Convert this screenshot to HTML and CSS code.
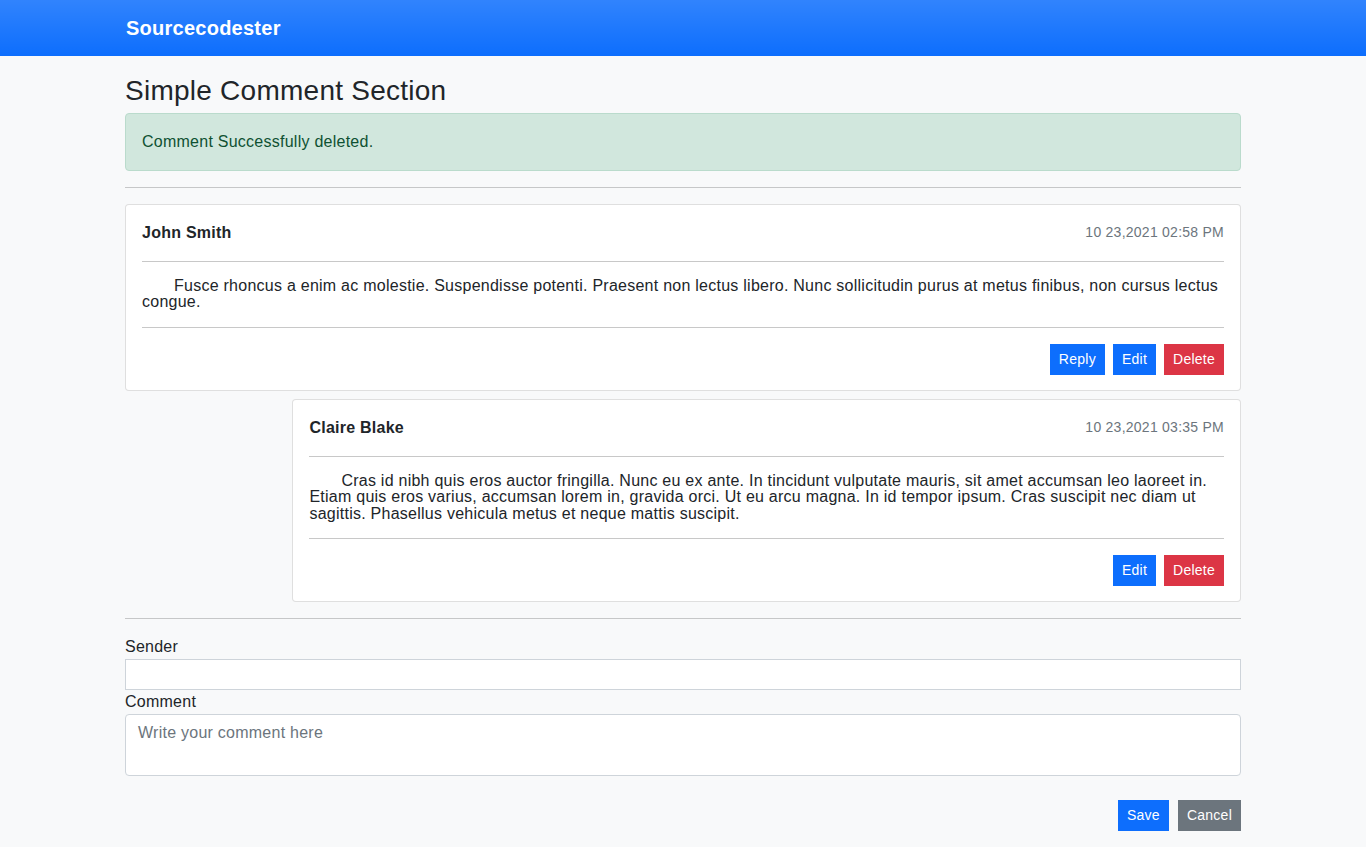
FILE: index.html
```html
<!DOCTYPE html>
<html lang="en">
<head>
    <meta charset="UTF-8">
    <meta name="viewport" content="width=device-width, initial-scale=1.0">
    <title>Simple Comment Section</title>
    <link rel="stylesheet" href="styles.css">
</head>
<body>
    <nav class="navbar">
        <div class="container">
            <a href="#" class="navbar-brand">Sourcecodester</a>
        </div>
    </nav>

    <div class="container page">
        <h3 class="page-title">Simple Comment Section</h3>

        <div class="alert alert-success">Comment Successfully deleted.</div>
        <hr>

        <div class="comment-list">
            <div class="card">
                <div class="card-body">
                    <div class="comment-head">
                        <div class="sender">John Smith</div>
                        <div class="date">10 23,2021 02:58 PM</div>
                    </div>
                    <hr>
                    <p class="comment-text">Fusce rhoncus a enim ac molestie. Suspendisse potenti. Praesent non lectus libero. Nunc sollicitudin purus at metus finibus, non cursus lectus congue.</p>
                    <hr>
                    <div class="actions">
                        <button class="btn btn-primary">Reply</button>
                        <button class="btn btn-primary">Edit</button>
                        <button class="btn btn-danger">Delete</button>
                    </div>
                </div>
            </div>

            <div class="card reply">
                <div class="card-body">
                    <div class="comment-head">
                        <div class="sender">Claire Blake</div>
                        <div class="date">10 23,2021 03:35 PM</div>
                    </div>
                    <hr>
                    <p class="comment-text">Cras id nibh quis eros auctor fringilla. Nunc eu ex ante. In tincidunt vulputate mauris, sit amet accumsan leo laoreet in. Etiam quis eros varius, accumsan lorem in, gravida orci. Ut eu arcu magna. In id tempor ipsum. Cras suscipit nec diam ut sagittis. Phasellus vehicula metus et neque mattis suscipit.</p>
                    <hr>
                    <div class="actions">
                        <button class="btn btn-primary">Edit</button>
                        <button class="btn btn-danger">Delete</button>
                    </div>
                </div>
            </div>
        </div>

        <hr>

        <form class="comment-form" onsubmit="return false">
            <label for="sender" class="form-label">Sender</label>
            <input type="text" id="sender" class="form-control input-sm">
            <label for="comment" class="form-label">Comment</label>
            <textarea id="comment" class="form-control" rows="2" placeholder="Write your comment here"></textarea>
            <div class="form-actions">
                <button class="btn btn-primary">Save</button>
                <button type="reset" class="btn btn-secondary">Cancel</button>
            </div>
        </form>
    </div>
</body>
</html>
```

FILE: styles.css
```css
* {
    box-sizing: border-box;
}

body {
    margin: 0;
    font-family: "Comic Sans MS", "Liberation Sans", Arial, sans-serif;
    font-size: 16px;
    line-height: 1.5;
    letter-spacing: 0.25px;
    color: #212529;
    background-color: #f8f9fa;
}

.container {
    width: 1140px;
    margin: 0 auto;
    padding: 0 12px;
}

/* Navbar */
.navbar {
    background-color: #0d6efd;
    background-image: linear-gradient(180deg, rgba(255, 255, 255, 0.15), rgba(255, 255, 255, 0));
    padding: 8px 0;
}

.navbar-brand {
    display: inline-block;
    padding: 5px 0;
    margin-left: 1px;
    font-size: 20px;
    line-height: 30px;
    font-weight: 600;
    color: #fff;
    text-decoration: none;
}

.page {
    padding-top: 18px;
    padding-bottom: 16px;
}

.page-title {
    margin: 0 0 5px;
    font-size: 28px;
    font-weight: 500;
    line-height: 1.2;
}

hr {
    margin: 16px 0;
    border: 0;
    border-top: 1px solid #c6c7c8;
}

.alert {
    padding: 16px;
    margin-bottom: 16px;
    border: 1px solid transparent;
    border-radius: 4px;
}

.alert-success {
    color: #0f5132;
    background-color: #d1e7dd;
    border-color: #badbcc;
}

/* Comments */
.card {
    background: #fff;
    border: 1px solid rgba(0, 0, 0, 0.125);
    border-radius: 4px;
    margin-bottom: 8px;
}

.card:last-child {
    margin-bottom: 0;
}

.card.reply {
    margin-left: 15%;
}

.card-body {
    padding: 16px 16px 15px;
}

.card-body hr {
    border-top-color: #c8c8c8;
}

.comment-head {
    display: flex;
    justify-content: space-between;
    align-items: center;
}

.sender {
    font-weight: 700;
}

.date {
    color: #6c757d;
    font-size: 14px;
}

.comment-text {
    margin: 0;
    text-indent: 32px;
    line-height: 16.5px;
}

.actions,
.form-actions {
    display: flex;
    justify-content: flex-end;
    gap: 8px;
}

.form-actions {
    margin-top: 24px;
    gap: 9px;
}

/* Buttons */
.btn {
    padding: 4px 8px;
    font-family: inherit;
    font-size: 14px;
    line-height: 21px;
    letter-spacing: 0.25px;
    color: #fff;
    border: 1px solid transparent;
    border-radius: 0;
    cursor: pointer;
}

.btn-primary {
    background-color: #0d6efd;
    border-color: #0d6efd;
}

.btn-danger {
    background-color: #dc3545;
    border-color: #dc3545;
}

.btn-secondary {
    background-color: #6c757d;
    border-color: #6c757d;
}

/* Form */
.comment-form {
    display: flex;
    flex-direction: column;
}

.form-label {
    display: block;
    line-height: 24px;
}

.form-control {
    display: block;
    width: 100%;
    padding: 6px 12px;
    font-family: inherit;
    font-size: 16px;
    line-height: 24px;
    letter-spacing: 0.25px;
    color: #212529;
    background: #fff;
    border: 1px solid #ced4da;
    border-radius: 4px;
    resize: none;
}

.form-control::placeholder {
    color: #6c757d;
}

.input-sm {
    height: 31px;
    padding: 4px 8px;
    border-radius: 0;
}

textarea.form-control {
    height: 62px;
}
```
